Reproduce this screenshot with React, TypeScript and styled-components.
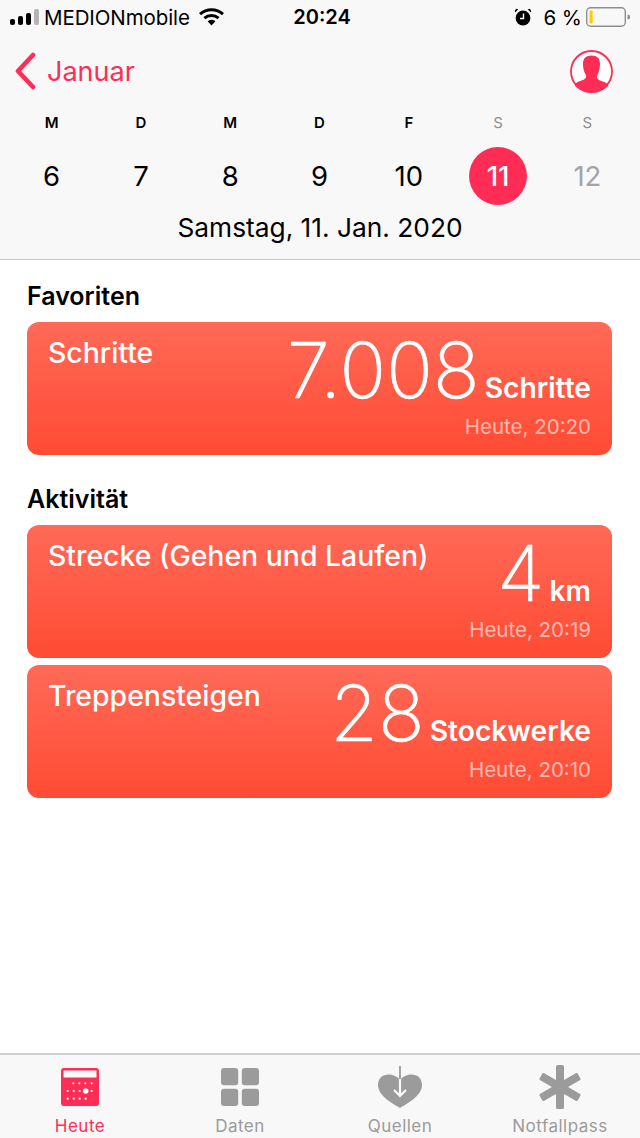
import React from 'react';
import styled, { createGlobalStyle } from 'styled-components';

const GlobalStyle = createGlobalStyle`
  html, body {
    margin: 0;
    padding: 0;
    background: #fff;
  }
  body {
    font-family: Inter, "Liberation Sans", sans-serif;
    -webkit-font-smoothing: antialiased;
  }
`;

const PINK = '#ff2d55';
const GREY = '#9b9b9b';

const Page = styled.div`
  width: 640px;
  height: 1138px;
  display: flex;
  flex-direction: column;
  overflow: hidden;
  background: #fff;
`;

const Header = styled.header`
  height: 260px;
  box-sizing: border-box;
  flex: none;
  background: #f8f8f8;
  border-bottom: 1px solid #c8c8c8;
  display: flex;
  flex-direction: column;
`;

const StatusBar = styled.div`
  height: 34px;
  padding: 0 10px 0 10px;
  display: grid;
  grid-template-columns: 1fr auto 1fr;
  align-items: center;
  color: #000;
  font-size: 20.5px;
`;

const StatusLeft = styled.div`
  display: flex;
  align-items: center;
`;

const Carrier = styled.span`
  margin-left: 5px;
  margin-right: 9px;
  letter-spacing: -0.1px;
`;

const Clock = styled.span`
  margin-left: 4px;
  font-weight: 600;
  font-size: 20px;
`;

const StatusRight = styled.div`
  display: flex;
  align-items: center;
  justify-content: flex-end;
`;

const Percent = styled.span`
  margin: 0 4px 0 11px;
`;

const NavRow = styled.div`
  height: 74px;
  padding: 0 27px 0 15px;
  display: flex;
  align-items: center;
  justify-content: space-between;
`;

const BackLink = styled.div`
  display: flex;
  align-items: center;
  gap: 10px;
  color: ${PINK};
  font-size: 27px;
`;

const WeekGrid = styled.div`
  display: grid;
  grid-template-columns: repeat(7, 89.3px);
  margin-top: 5px;
  padding-left: 7px;
`;

const DayLetter = styled.div<{ $muted?: boolean }>`
  text-align: center;
  font-size: 15px;
  line-height: 20px;
  height: 34px;
  color: ${(p) => (p.$muted ? '#8e8e8e' : '#000')};
  font-weight: ${(p) => (p.$muted ? 400 : 600)};
`;

const DayCell = styled.div`
  display: flex;
  justify-content: center;
`;

const DayNumber = styled.div<{ $active?: boolean; $muted?: boolean }>`
  width: 58px;
  height: 58px;
  border-radius: 50%;
  display: flex;
  align-items: center;
  justify-content: center;
  font-size: 27.5px;
  background: ${(p) => (p.$active ? PINK : 'transparent')};
  color: ${(p) => (p.$active ? '#fff' : p.$muted ? '#a4a4a4' : '#000')};
  font-weight: ${(p) => (p.$active ? 500 : 400)};
`;

const DateLine = styled.div`
  text-align: center;
  font-size: 26.3px;
  line-height: 32px;
  margin-top: 7px;
  color: #000;
`;

const Content = styled.main`
  flex: 1;
  padding: 20px 28px 0 27px;
`;

const SectionTitle = styled.h2<{ $spaced?: boolean }>`
  margin: ${(p) => (p.$spaced ? '28px' : '0')} 0 10px 0;
  font-size: 25px;
  line-height: 32px;
  font-weight: 600;
  color: #000;
`;

const CardStack = styled.div`
  display: flex;
  flex-direction: column;
  gap: 7px;
`;

const Card = styled.div`
  height: 133px;
  box-sizing: border-box;
  padding: 14px 21px 0;
  border-radius: 12px;
  display: flex;
  justify-content: space-between;
  color: #fff;
  background: linear-gradient(180deg, #ff6a58 0%, #ff4b33 100%);
`;

const CardTitle = styled.div`
  font-size: 28.4px;
  line-height: 34px;
  font-weight: 500;
  white-space: nowrap;
`;

const CardRight = styled.div`
  display: flex;
  flex-direction: column;
  align-items: flex-end;
`;

const ValueRow = styled.div`
  display: flex;
  align-items: baseline;
  gap: 5px;
  height: 75px;
`;

const Value = styled.span`
  font-size: 77px;
  font-weight: 200;
  line-height: 68px;
  letter-spacing: 0.2px;
  -webkit-text-stroke: 0.7px #fff;
`;

const Unit = styled.span`
  font-size: 28.2px;
  font-weight: 600;
`;

const Time = styled.div`
  margin-top: 3px;
  font-size: 20.5px;
  line-height: 26px;
  color: rgba(255, 255, 255, 0.6);
`;

const TabBar = styled.nav`
  height: 85px;
  flex: none;
  box-sizing: border-box;
  background: #f8f8f8;
  border-top: 2px solid #d0d0d0;
  display: grid;
  grid-template-columns: repeat(4, 160px);
`;

const Tab = styled.div<{ $active?: boolean }>`
  padding-top: 10px;
  display: flex;
  flex-direction: column;
  align-items: center;
  color: ${(p) => (p.$active ? PINK : GREY)};
`;

const TabIcon = styled.div`
  height: 44px;
  display: flex;
  align-items: center;
  justify-content: center;
`;

const TabLabel = styled.span`
  margin-top: 6px;
  font-size: 17px;
  font-weight: 400;
  line-height: 22px;
  letter-spacing: 0.5px;
`;

const SignalIcon = () => (
  <svg width="29" height="17" viewBox="0 0 29 17">
    <rect x="0" y="10" width="5" height="6" rx="2" fill="#000" />
    <rect x="8" y="7" width="5" height="9" rx="2" fill="#000" />
    <rect x="16" y="4" width="5" height="12" rx="2" fill="#000" />
    <rect x="24" y="0" width="5" height="16" rx="2" fill="#b4b4b4" />
  </svg>
);

const WifiIcon = () => (
  <svg width="25" height="18" viewBox="0 0 25 18">
    <path d="M1 6.2C7.6 .3 17.4 .3 24 6.2" fill="none" stroke="#000" strokeWidth="3" />
    <path d="M5.4 10.2c4.2-3.6 10-3.6 14.2 0" fill="none" stroke="#000" strokeWidth="3" />
    <path d="M8.6 13.2c2.4-2 5.4-2 7.8 0L12.5 17.5z" fill="#000" />
  </svg>
);

const AlarmIcon = () => (
  <svg width="18" height="18" viewBox="0 0 18 18">
    <circle cx="9" cy="10" r="7.4" fill="#000" />
    <path d="M1 4.6 4.2 1.4 2.8.8C1.4 1.2.6 2.6 1 4.6zM17 4.6 13.8 1.4 15.2.8c1.4.4 2.2 1.8 1.8 3.8z" fill="#000" />
    <path d="M9.5 5.5V10.5H6" fill="none" stroke="#fff" strokeWidth="1.4" />
  </svg>
);

const BatteryIcon = () => (
  <svg width="44" height="20" viewBox="0 0 44 20">
    <rect x="0.7" y="0.7" width="38.6" height="18.6" rx="4" fill="none" stroke="#8e8e8e" strokeWidth="1.4" />
    <rect x="3.5" y="3.5" width="3.2" height="13" rx="1.2" fill="#ffcc00" />
    <path d="M41.5 7.5l2.5 1v3l-2.5 1z" fill="#8e8e8e" />
  </svg>
);

const BackChevron = () => (
  <svg width="22" height="38" viewBox="0 0 22 38">
    <path d="M18 3 3 19 18 35" fill="none" stroke={PINK} strokeWidth="4.6" strokeLinecap="round" strokeLinejoin="round" />
  </svg>
);

const ProfileIcon = () => (
  <svg width="43" height="43" viewBox="0 0 43 43">
    <circle cx="21.5" cy="21.5" r="20.5" fill="#fff" stroke={PINK} strokeWidth="1.8" />
    <path
      d="M21.5 5.5c5.6 0 8.5 2.8 8.5 8.5 0 4-1 8-2.4 10.5-.7 1.3-.9 2.4-.5 3.5.8 2 4.4 3 7.3 4.1 2 .8 3.2 2 3.8 3.9C34.5 39.8 28.3 42.2 21.5 42.2S8.5 39.8 4.8 35.5c.6-1.9 1.8-3.1 3.8-3.9 2.9-1.1 6.5-2.1 7.3-4.1.4-1.1.2-2.2-.5-3.5C14 22 13 18 13 14c0-5.7 2.9-8.5 8.5-8.5z"
      fill={PINK}
    />
  </svg>
);

const CalendarTabIcon = () => (
  <svg width="38" height="38" viewBox="0 0 38 38">
    <rect x="0" y="0" width="38" height="38" rx="3" fill={PINK} />
    <rect x="2.5" y="2.5" width="33" height="7" fill="#f8f8f8" />
    {[12.3, 18.3, 24.3, 30.7].map((x) => (
      <circle key={`a${x}`} cx={x} cy="15.3" r="1.1" fill="#fff" />
    ))}
    {[6.7, 12.7, 18.7, 30.7].map((x) => (
      <circle key={`b${x}`} cx={x} cy="23" r="1.1" fill="#fff" />
    ))}
    <circle cx="24.7" cy="23" r="2.8" fill="#fff" />
    {[6.7, 12.7, 18.7, 24.7].map((x) => (
      <circle key={`c${x}`} cx={x} cy="30.7" r="1.1" fill="#fff" />
    ))}
  </svg>
);

const GridTabIcon = () => (
  <svg width="38" height="38" viewBox="0 0 38 38" fill={GREY}>
    <rect x="0" y="0" width="17.2" height="17.2" rx="3" />
    <rect x="20.8" y="0" width="17.2" height="17.2" rx="3" />
    <rect x="0" y="20.8" width="17.2" height="17.2" rx="3" />
    <rect x="20.8" y="20.8" width="17.2" height="17.2" rx="3" />
  </svg>
);

const HeartTabIcon = () => (
  <svg width="44" height="44" viewBox="0 0 44 44">
    <path
      d="M22 43C12 37 0 30 0 20 0 13.5 4.5 9.5 10.5 9.5c5 0 9.5 2.5 11.5 5.5 2-3 6.5-5.5 11.5-5.5C39.5 9.5 44 13.5 44 20 44 30 32 37 22 43z"
      fill={GREY}
    />
    <path d="M22 1v14" fill="none" stroke={GREY} strokeWidth="1.8" />
    <path d="M22 14v17M16 25l6 6 6-6" fill="none" stroke="#f8f8f8" strokeWidth="2.2" />
  </svg>
);

const StarTabIcon = () => (
  <svg width="42" height="44" viewBox="0 0 42 44">
    <g fill={GREY}>
      <rect x="17" y="0" width="8" height="44" rx="1.5" />
      <rect x="17" y="0" width="8" height="44" rx="1.5" transform="rotate(60 21 22)" />
      <rect x="17" y="0" width="8" height="44" rx="1.5" transform="rotate(120 21 22)" />
    </g>
  </svg>
);

const DAYS = [
  { letter: 'M', day: 6 },
  { letter: 'D', day: 7 },
  { letter: 'M', day: 8 },
  { letter: 'D', day: 9 },
  { letter: 'F', day: 10 },
  { letter: 'S', day: 11, active: true, weekend: true },
  { letter: 'S', day: 12, weekend: true, future: true },
];

const TABS = [
  { label: 'Heute', icon: <CalendarTabIcon />, active: true },
  { label: 'Daten', icon: <GridTabIcon /> },
  { label: 'Quellen', icon: <HeartTabIcon /> },
  { label: 'Notfallpass', icon: <StarTabIcon /> },
];

interface MetricProps {
  title: string;
  value: string;
  unit: string;
  time: string;
}

const Metric = ({ title, value, unit, time }: MetricProps) => (
  <Card>
    <CardTitle>{title}</CardTitle>
    <CardRight>
      <ValueRow>
        <Value>{value}</Value>
        <Unit>{unit}</Unit>
      </ValueRow>
      <Time>{time}</Time>
    </CardRight>
  </Card>
);

const App = () => (
  <Page>
    <GlobalStyle />
    <Header>
      <StatusBar>
        <StatusLeft>
          <SignalIcon />
          <Carrier>MEDIONmobile</Carrier>
          <WifiIcon />
        </StatusLeft>
        <Clock>20:24</Clock>
        <StatusRight>
          <AlarmIcon />
          <Percent>6 %</Percent>
          <BatteryIcon />
        </StatusRight>
      </StatusBar>
      <NavRow>
        <BackLink>
          <BackChevron />
          Januar
        </BackLink>
        <ProfileIcon />
      </NavRow>
      <WeekGrid>
        {DAYS.map((d) => (
          <DayLetter key={d.day} $muted={d.weekend}>
            {d.letter}
          </DayLetter>
        ))}
        {DAYS.map((d) => (
          <DayCell key={d.day}>
            <DayNumber $active={d.active} $muted={d.future}>
              {d.day}
            </DayNumber>
          </DayCell>
        ))}
      </WeekGrid>
      <DateLine>Samstag, 11. Jan. 2020</DateLine>
    </Header>
    <Content>
      <SectionTitle>Favoriten</SectionTitle>
      <Metric title="Schritte" value="7.008" unit="Schritte" time="Heute, 20:20" />
      <SectionTitle $spaced>Aktivität</SectionTitle>
      <CardStack>
        <Metric title="Strecke (Gehen und Laufen)" value="4" unit="km" time="Heute, 20:19" />
        <Metric title="Treppensteigen" value="28" unit="Stockwerke" time="Heute, 20:10" />
      </CardStack>
    </Content>
    <TabBar>
      {TABS.map((t) => (
        <Tab key={t.label} $active={t.active}>
          <TabIcon>{t.icon}</TabIcon>
          <TabLabel>{t.label}</TabLabel>
        </Tab>
      ))}
    </TabBar>
  </Page>
);

export default App;
